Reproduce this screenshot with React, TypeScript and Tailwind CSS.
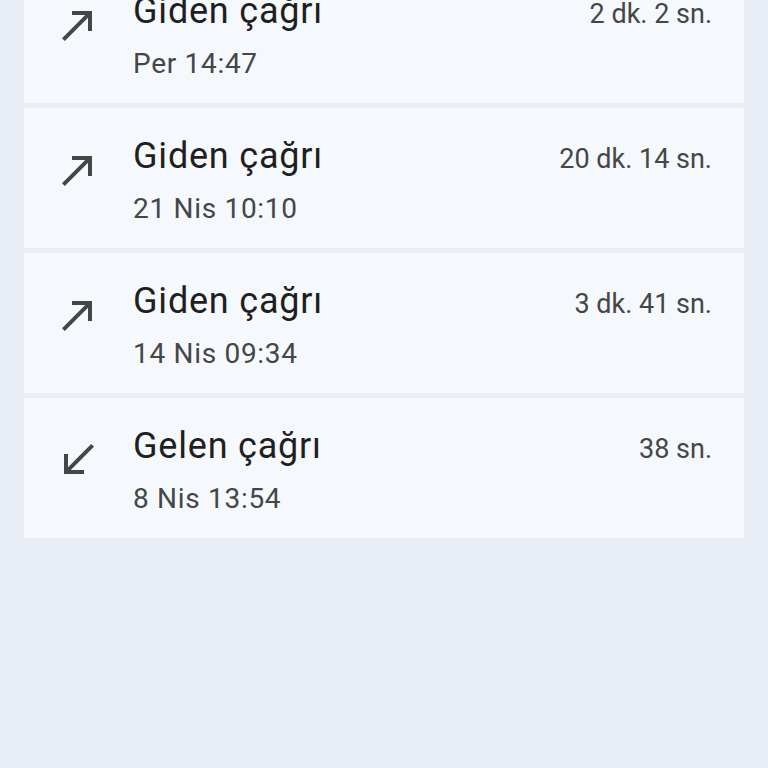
import { ReactNode } from "react"

type Call = {
  dir: "out" | "in"
  title: string
  date: string
  duration: string
}

const calls: Call[] = [
  { dir: "out", title: "Giden çağrı", date: "Per 14:47", duration: "2 dk. 2 sn." },
  { dir: "out", title: "Giden çağrı", date: "21 Nis 10:10", duration: "20 dk. 14 sn." },
  { dir: "out", title: "Giden çağrı", date: "14 Nis 09:34", duration: "3 dk. 41 sn." },
  { dir: "in", title: "Gelen çağrı", date: "8 Nis 13:54", duration: "38 sn." },
]

function CallIcon({ dir }: { dir: Call["dir"] }): ReactNode {
  return (
    <svg className="h-12 w-12 text-[#444746]" viewBox="0 0 24 24" fill="currentColor">
      {dir === "out" ? (
        <path d="M9 5v2h6.59L4 18.59 5.41 20 17 8.41V15h2V5z" />
      ) : (
        <path d="M20 5.41 18.59 4 7 15.59V9H5v10h10v-2H8.41z" />
      )}
    </svg>
  )
}

export default function App() {
  return (
    <div className="h-[768px] overflow-hidden bg-[#e9eef6] font-['Roboto',sans-serif]">
      <div className="mx-6 -mt-[37px] flex flex-col gap-[5px]">
        {calls.map((call, i) => (
          <div key={i} className="flex h-[140px] bg-[#f5f8fd] pl-[30px] pr-[32px]">
            <div className="mt-[38px] shrink-0">
              <CallIcon dir={call.dir} />
            </div>
            <div className="ml-[31px] flex-1 pt-[26px]">
              <div className="flex items-baseline">
                <span className="flex-1 text-[36px] leading-[44px] tracking-[0.8px] text-[#1f1f1f]">
                  {call.title}
                </span>
                <span className="text-[27px] leading-[44px] text-[#444746]">{call.duration}</span>
              </div>
              <div className="mt-[10px] text-[28px] leading-[36px] tracking-[0.7px] text-[#444746]">
                {call.date}
              </div>
            </div>
          </div>
        ))}
      </div>
    </div>
  )
}
